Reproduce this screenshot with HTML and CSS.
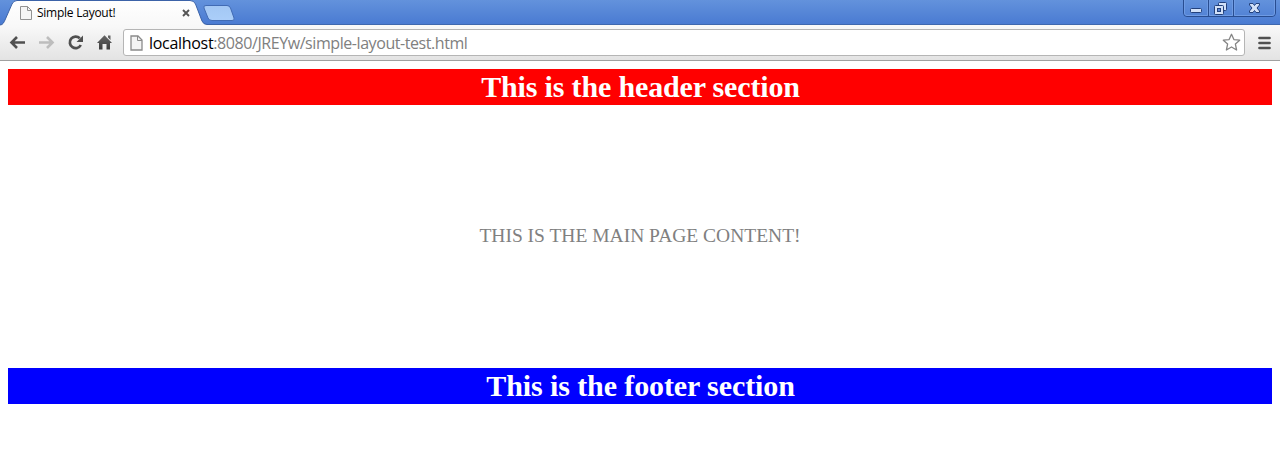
FILE: index.html
```html
<!DOCTYPE html>
<html lang="en">
<head>
<meta charset="utf-8">
<title>Simple Layout!</title>
<link rel="stylesheet" href="styles.css">
</head>
<body>
<div class="tabstrip">
  <div class="tab">
    <svg class="tab-shape" width="250" height="26" viewBox="0 0 250 26">
      <defs>
        <linearGradient id="tabfill" x2="0" y2="1"><stop stop-color="#fff"/><stop offset="1" stop-color="#f8f8f8"/></linearGradient>
        <linearGradient id="newfill" x2="0" y2="1"><stop stop-color="#a3c7f4"/><stop offset="1" stop-color="#abcef9"/></linearGradient>
      </defs>
      <path d="M0 25C3 25 4 22 5 20L12 4Q13.500 .5 17 .5H190Q194 .5 195.500 4L202 21Q203.500 24.500 207 24.500H250V26H0Z" fill="url(#tabfill)"/>
      <path d="M0 25C3 25 4 22 5 20L12 4Q13.500 .5 17 .5H190Q194 .5 195.500 4L202 21Q203.500 24.500 207 24.500H250" fill="none" stroke="#3c63a8"/>
      <path d="M206 5.500H227Q229.500 5.500 230.500 8L234 18Q235 20.500 232 20.500H212Q209 20.500 208 18L204 8Q203 5.500 206 5.500Z" fill="url(#newfill)" stroke="#416bb4"/>
    </svg>
    <svg class="tab-page" width="12" height="15" viewBox="0 0 12 15"><path d="M.5.5H7.500L11.500 4.500V13.500H.5Z" fill="#f5f5f5" stroke="#929292"/><path d="M7.500.5V4.500H11.500" fill="none" stroke="#929292"/></svg>
    <span class="tab-title">Simple Layout!</span>
    <svg class="tab-close" width="8" height="8" viewBox="0 0 8 8"><path d="M1 1L7 7M7 1L1 7" stroke="#555" stroke-width="1.900"/></svg>
  </div>
  <svg class="window-buttons" width="94" height="18" viewBox="0 0 94 18">
    <path d="M.5 0V13Q.5 16.500 4 16.500H89Q92.500 16.500 92.500 13V0M25.500 0V16M50.500 0V16" fill="none" stroke="#284d91"/>
    <path d="M1.500 0V13Q1.500 15.500 4 15.500H24.500V0M26.500 0V15.500H49.500V0M51.500 0V15.500H89Q91.500 15.500 91.500 13V0" fill="none" stroke="#6f9be3"/>
    <rect x="7.500" y="8.500" width="11" height="4" rx="1" fill="#d2e1f8" stroke="#23417c"/>
    <g fill="#d2e1f8" stroke="#23417c"><rect x="35.500" y="2.500" width="8" height="8" rx="1"/><rect x="31.500" y="5.500" width="9" height="9" rx="1"/><rect x="34.500" y="8.500" width="3" height="3" fill="#5b87d5"/></g>
    <path d="M66.500 3.500H70L71.500 5.500L73 3.500H76.500V5L74 8L76.500 11V12.500H73L71.500 10.500L70 12.500H66.500V11L69 8L66.500 5Z" fill="#d2e1f8" stroke="#23417c"/>
  </svg>
</div>
<div class="toolbar">
  <svg class="nav" width="124" height="35" viewBox="0 0 124 35">
    <defs><linearGradient id="icon" x2="0" y2="1"><stop stop-color="#666"/><stop offset="1" stop-color="#3e3e3e"/></linearGradient></defs>
    <path d="M17 12L11.500 17.500L17 23M12 17.500H25" fill="none" stroke="#505050" stroke-width="2.600"/>
    <path d="M47 12L52.500 17.500L47 23M39 17.500H52" fill="none" stroke="#bdbdbd" stroke-width="2.600"/>
    <path d="M79.800 13.300A5.800 5.800 0 1 0 80.800 20" fill="none" stroke="#505050" stroke-width="2.700"/>
    <path d="M83 10.500V17H76.500Z" fill="#505050"/>
    <path d="M97 18L104.500 10.300L112 18H110V24.500H106.500V19H102.500V24.500H99V18ZM108 10.500H110.500V15L108 12.500Z" fill="url(#icon)"/>
  </svg>
  <div class="omnibox">
    <svg class="page" width="13" height="17" viewBox="0 0 13 17"><path d="M1 2H8L12 6V16H1Z" fill="#f4f4f4" stroke="#8b8b8b" stroke-width="1.300"/><path d="M7.500 2V6.500H12" fill="none" stroke="#8b8b8b"/></svg>
    <span class="url"><b>localhost</b>:8080/JREYw/simple-layout-test.html</span>
    <svg class="star" width="19" height="19" viewBox="0 0 19 19"><path d="M9.500 1.300L11.900 6.600L17.700 7.200L13.400 11.100L14.600 17L9.500 14L4.400 17L5.600 11.100L1.300 7.200L7.100 6.600Z" fill="#fff" stroke="#858585" stroke-width="1.300" stroke-linejoin="round"/></svg>
  </div>
  <svg class="menu" width="13" height="14" viewBox="0 0 13 14"><path d="M1.500 2H11.500M1.500 7H11.500M1.500 12H11.500" stroke="#505050" stroke-width="2.700" stroke-linecap="round"/></svg>
</div>
<div class="page-view">
  <header class="banner header">This is the header section</header>
  <main class="content">THIS IS THE MAIN PAGE CONTENT!</main>
  <footer class="banner footer">This is the footer section</footer>
</div>
</body>
</html>
```
FILE: styles.css
```css
body { margin: 0; height: 469px; overflow: hidden; background: #fff; }
svg { display: block; flex: none; }
.tabstrip { display: flex; justify-content: space-between; height: 25px; box-sizing: border-box; border-bottom: 1px solid #3f68ae; background: linear-gradient(#6392dc, #4a7bd2); }
.tab { display: flex; position: relative; width: 250px; height: 25px; }
.tab-shape { position: absolute; left: 0; top: 0; }
.tab-page { position: relative; margin: 6px 0 0 20px; }
.tab-title { position: relative; width: 144px; margin-left: 5px; font: 12px/26px "Open Sans", "Noto Sans", sans-serif; letter-spacing: -.25px; color: #000; white-space: nowrap; }
.tab-close { position: relative; margin: 9px 0 0 1px; }
.window-buttons { margin-right: 3px; }
.toolbar { display: flex; height: 36px; box-sizing: border-box; border-bottom: 1px solid #a0a0a0; background: linear-gradient(#f9f9f9, #e3e3e3); }
.nav { margin-right: -1px; }
.omnibox { display: flex; align-items: center; box-sizing: border-box; width: 1122px; height: 27px; margin-top: 4px; padding: 0 3px 0 6px; border: 1px solid #b5b5b5; border-radius: 3px; background: #fff; }
.url { flex: 1; margin-left: 6px; font: 16px/24px "Open Sans", "Noto Sans", sans-serif; letter-spacing: -.43px; color: #808080; white-space: nowrap; }
.url b { font-weight: 400; letter-spacing: -.3px; color: #000; }
.menu { margin: 11px 0 0 13px; }
.page-view { padding: 8px; font-family: "Liberation Serif", serif; }
.banner { height: 36px; box-sizing: border-box; padding-left: 1px; font-size: 30px; line-height: 36px; font-weight: 700; letter-spacing: -.16px; text-align: center; color: #fff; }
.header { background: #f00; }
.footer { letter-spacing: -.1px; background: #00f; }
.content { height: 263px; font-size: 19.5px; line-height: 262px; text-align: center; color: #808080; }
```
